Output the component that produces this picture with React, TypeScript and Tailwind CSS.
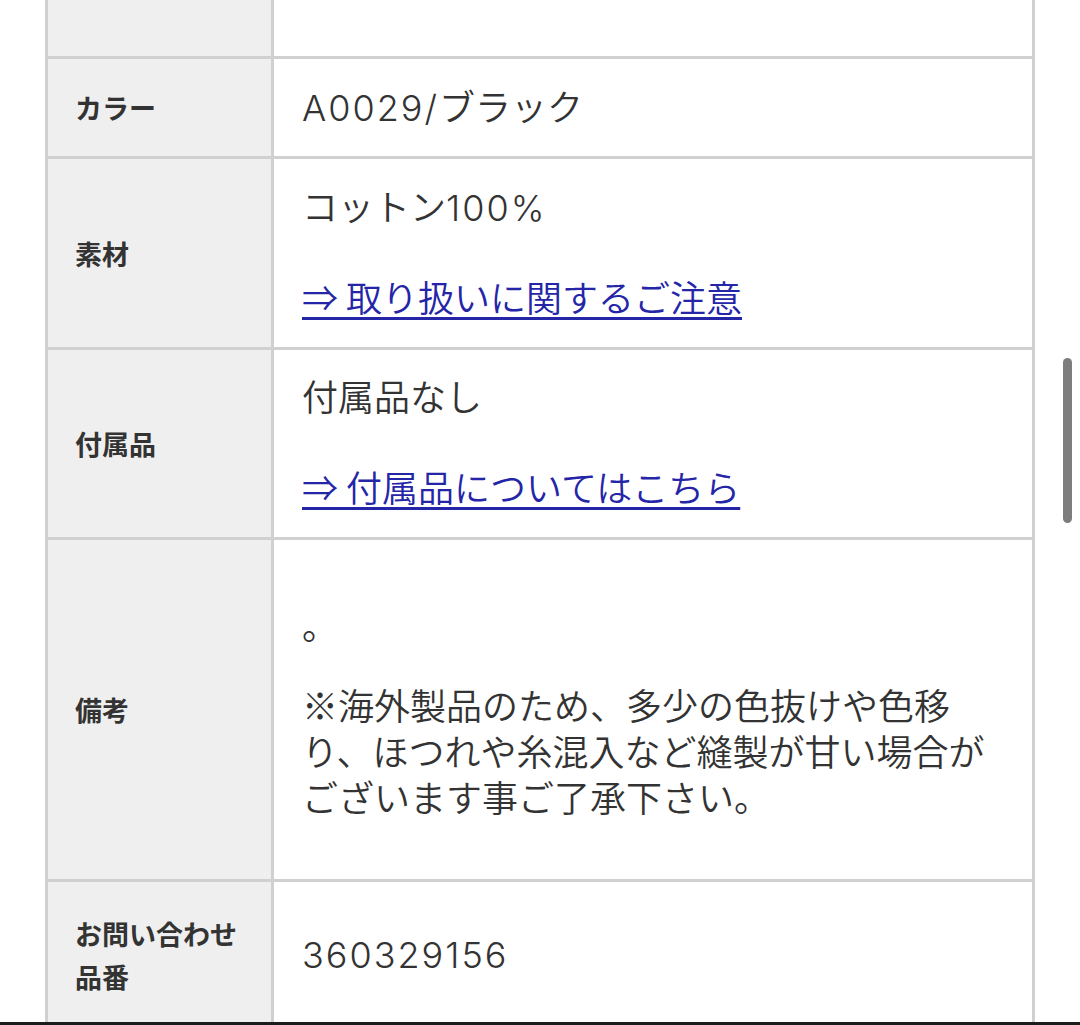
import React from "react";

const valueFont = { fontFamily: 'Inter, "Noto Sans CJK JP", sans-serif' };
const cjk = { fontFamily: '"Noto Sans CJK JP", sans-serif' };

function Row({
  label,
  h,
  children,
}: {
  label?: React.ReactNode;
  h: string;
  children?: React.ReactNode;
}) {
  return (
    <div className={`flex border-b-[3px] border-[#d0d0d0] ${h}`}>
      <div className="flex w-[226px] shrink-0 items-center border-r-[3px] border-[#d0d0d0] bg-[#efefef] pl-[27px] text-[27px] font-bold leading-[43px] text-[#333]">
        {label}
      </div>
      <div
        className="flex min-w-0 flex-1 flex-col justify-center bg-white pl-[28px] pr-[28px] text-[36px] font-[350] leading-[46px] text-[#333]"
        style={valueFont}
      >
        {children}
      </div>
    </div>
  );
}

function Link({ children }: { children: React.ReactNode }) {
  return (
    <div>
      <a
        href="#"
        className="text-[#2525a8] underline decoration-[3px] underline-offset-[5px]"
        style={cjk}
      >
        {children}
      </a>
    </div>
  );
}

function Lat({ children }: { children: React.ReactNode }) {
  return <span className="tracking-[2px]">{children}</span>;
}

export default function App() {
  return (
    <div
      className="relative h-[1025px] w-[1080px] overflow-hidden bg-white"
      style={cjk}
    >
      <div className="h-[1022px] overflow-hidden">
        <div className="ml-[45px] w-[990px] border-x-[3px] border-[#d0d0d0]">
          <Row h="h-[59px]" />
          <Row h="h-[100px]" label="カラー">
            <div>
              <Lat>A0029/</Lat>ブラック
            </div>
          </Row>
          <Row h="h-[191px]" label="素材">
            <div>
              コットン<Lat>100%</Lat>
            </div>
            <div className="mt-[42px]">
              <Link>⇒ 取り扱いに関するご注意</Link>
            </div>
          </Row>
          <Row h="h-[190px]" label="付属品">
            <div>付属品なし</div>
            <div className="mt-[42px]">
              <Link>⇒ 付属品についてはこちら</Link>
            </div>
          </Row>
          <Row h="h-[342px]" label="備考">
            <div style={cjk}>。</div>
            <div className="mt-[34px]" style={cjk}>
              ※海外製品のため、多少の色抜けや色移り、ほつれや糸混入など縫製が甘い場合がございます事ご了承下さい。
            </div>
          </Row>
          <Row
            h="h-[149px]"
            label={
              <div>
                お問い合わせ
                <br />
                品番
              </div>
            }
          >
            <div>
              <Lat>360329156</Lat>
            </div>
          </Row>
        </div>
      </div>
      <div className="h-[3px] w-full bg-[#1c1c1c]" />
      <div className="absolute left-[1063px] top-[358px] h-[165px] w-[9px] rounded-full bg-[#7d7d7d]" />
    </div>
  );
}
